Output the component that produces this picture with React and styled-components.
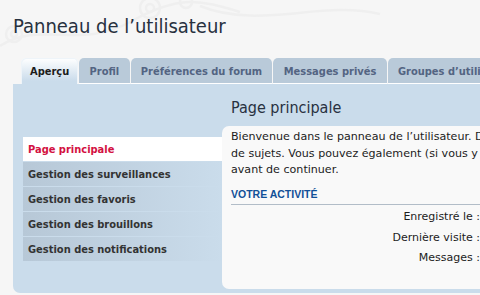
import React from "react";
import styled, { createGlobalStyle } from "styled-components";

const Global = createGlobalStyle`
  html, body { margin: 0; padding: 0; }
  body {
    background: #f5f5f5;
    overflow: hidden;
    font-family: "DejaVu Sans", Verdana, sans-serif;
    color: #1c1c1c;
  }
`;

const condensed = `"DejaVu Sans Condensed", "DejaVu Sans", sans-serif`;

const Page = styled.div`
  position: relative;
  width: 980px;
  height: 295px;
  padding: 0 0 0 13px;
  box-sizing: border-box;
  background: #f6f6f6;
`;

const Deco = styled.svg`
  position: absolute;
  left: 0;
  top: 0;
  pointer-events: none;
`;

const Title = styled.h1`
  position: relative;
  margin: 0;
  padding-top: 14px;
  height: 58px;
  box-sizing: border-box;
  font-family: ${condensed};
  font-weight: normal;
  font-size: 20px;
  line-height: 24px;
  color: #28313f;
`;

const Tabs = styled.ul`
  position: relative;
  display: flex;
  align-items: flex-end;
  gap: 1px;
  list-style: none;
  margin: 0;
  padding: 0 0 0 8px;
  height: 26px;
`;

const Tab = styled.li`
  display: flex;
  align-items: center;
  box-sizing: border-box;
  padding: 0 ${(p) => (p.$active ? "9px" : "10.3px")};
  border-radius: 5px 5px 0 0;
  font-family: ${condensed};
  font-size: 11px;
  font-weight: bold;
  white-space: nowrap;
  color: ${(p) => (p.$active ? "#1c1c1c" : "#536482")};
  background: ${(p) =>
    p.$active ? "linear-gradient(#ffffff, #cadceb 85%)" : "#b9cad9"};
  height: ${(p) => (p.$active ? "27px" : "26px")};
  margin-bottom: ${(p) => (p.$active ? "-1px" : "0")};
  box-shadow: ${(p) =>
    p.$active
      ? "inset 1px 1px 0 #eef4f9, inset -1px 0 0 #eef4f9"
      : "inset 0 -1px 0 #ffffff"};
`;

const Panel = styled.div`
  position: relative;
  display: flex;
  background: #cadceb;
  border-radius: 0 0 7px 7px;
  padding: 0 0 0 10px;
  height: 209px;
  box-sizing: border-box;
`;

const Menu = styled.ul`
  list-style: none;
  margin: 53px 0 0 0;
  padding: 0;
  width: 199px;
  display: flex;
  flex-direction: column;
  gap: 1px;
`;

const MenuItem = styled.li`
  height: 24px;
  display: flex;
  align-items: center;
  padding-left: 5px;
  font-family: ${condensed};
  font-size: 11px;
  font-weight: bold;
  color: ${(p) => (p.$active ? "#d31141" : "#333333")};
  background: ${(p) =>
    p.$active ? "#ffffff" : "linear-gradient(to right, #b7c8d7, #cadceb)"};
`;

const Main = styled.div`
  flex: 1;
  display: flex;
  flex-direction: column;
`;

const Heading = styled.h2`
  margin: 0;
  padding: 14px 0 0 9px;
  height: 42px;
  box-sizing: border-box;
  font-family: ${condensed};
  font-weight: normal;
  font-size: 16px;
  line-height: 20px;
  color: #28313f;
`;

const Box = styled.div`
  flex: 1;
  background: #f9f9f9;
  border-radius: 7px 0 0 7px;
  margin-bottom: 4px;
  padding: 3px 0 0 9px;
  font-size: 11.1px;
  line-height: 16.5px;
  color: #1c1c1c;
`;

const Intro = styled.p`
  margin: 0;
  white-space: nowrap;
`;

const SectionTitle = styled.h3`
  margin: 8px 0 0 0;
  width: 540px;
  font-family: "Liberation Sans", Arial, sans-serif;
  font-size: 10.5px;
  font-weight: bold;
  text-transform: uppercase;
  color: #115098;
  line-height: 14px;
  padding-bottom: 3px;
  border-bottom: 1px solid #b2bdc8;
`;

const Details = styled.dl`
  margin: 3px 0 0 0;
  display: flex;
  flex-direction: column;
`;

const Row = styled.div`
  display: flex;
  gap: 6px;
  height: 20.4px;
  align-items: center;
  font-size: 11px;
`;

const Dt = styled.dt`
  width: 249px;
  text-align: right;
  white-space: nowrap;
`;

const Dd = styled.dd`
  margin: 0;
  white-space: nowrap;
`;

export default function App() {
  return (
    <Page>
      <Global />
      <Deco width="480" height="90" viewBox="0 0 480 90">
        <g fill="none" stroke="#efefef" strokeWidth="2.5">
          <circle cx="150" cy="8" r="10" />
          <circle cx="150" cy="8" r="4" />
          <circle cx="186" cy="2" r="6" />
          <circle cx="14" cy="34" r="8" />
          <circle cx="14" cy="34" r="3" />
          <path d="M0 46 C40 20 80 50 130 22 S200 0 240 12" />
          <path d="M200 6 C260 30 320 0 380 14" />
        </g>
      </Deco>
      <Title>Panneau de l’utilisateur</Title>
      <Tabs>
        <Tab $active>Aperçu</Tab>
        <Tab>Profil</Tab>
        <Tab>Préférences du forum</Tab>
        <Tab>Messages privés</Tab>
        <Tab>Groupes d’utilisateurs</Tab>
      </Tabs>
      <Panel>
        <Menu>
          <MenuItem $active>Page principale</MenuItem>
          <MenuItem>Gestion des surveillances</MenuItem>
          <MenuItem>Gestion des favoris</MenuItem>
          <MenuItem>Gestion des brouillons</MenuItem>
          <MenuItem>Gestion des notifications</MenuItem>
        </Menu>
        <Main>
          <Heading>Page principale</Heading>
          <Box>
            <Intro>
              Bienvenue dans le panneau de l’utilisateur. Depuis ce panneau, vous pouvez gérer vos surveillances de forums et
              <br />
              de sujets. Vous pouvez également (si vous y êtes autorisé) consulter vos messages privés. Lisez les annonces ci-dessous
              <br />
              avant de continuer.
            </Intro>
            <SectionTitle>Votre activité</SectionTitle>
            <Details>
              <Row>
                <Dt>Enregistré le :</Dt>
                <Dd>lun. 1 janv. 2018</Dd>
              </Row>
              <Row>
                <Dt>Dernière visite :</Dt>
                <Dd>mar. 2 janv. 2018</Dd>
              </Row>
              <Row>
                <Dt>Messages :</Dt>
                <Dd>0</Dd>
              </Row>
            </Details>
          </Box>
        </Main>
      </Panel>
    </Page>
  );
}
